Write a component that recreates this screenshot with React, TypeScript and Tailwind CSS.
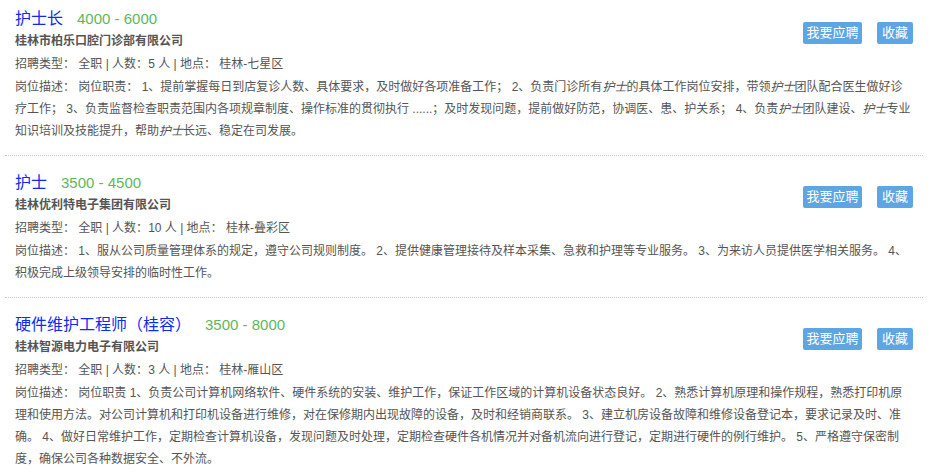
import * as React from 'react';

type Job = {
  title: string;
  salary: string;
  company: string;
  count: string;
  place: string;
  desc: React.ReactNode;
};

const Em = ({ children }: { children: React.ReactNode }) => (
  <em className="italic">{children}</em>
);

const jobs: Job[] = [
  {
    title: '护士长',
    salary: '4000 - 6000',
    company: '桂林市柏乐口腔门诊部有限公司',
    count: '5',
    place: '桂林-七星区',
    desc: (
      <>
        岗位职责： 1、提前掌握每日到店复诊人数、具体要求，及时做好各项准备工作； 2、负责门诊所有<Em>护士</Em>的具体工作岗位安排，带领<Em>护士</Em>团队配合医生做好诊疗工作； 3、负责监督检查职责范围内各项规章制度、操作标准的贯彻执行 ......；及时发现问题，提前做好防范，协调医、患、护关系； 4、负责<Em>护士</Em>团队建设、<Em>护士</Em>专业知识培训及技能提升，帮助<Em>护士</Em>长远、稳定在司发展。
      </>
    ),
  },
  {
    title: '护士',
    salary: '3500 - 4500',
    company: '桂林优利特电子集团有限公司',
    count: '10',
    place: '桂林-叠彩区',
    desc: '1、服从公司质量管理体系的规定，遵守公司规则制度。 2、提供健康管理接待及样本采集、急救和护理等专业服务。 3、为来访人员提供医学相关服务。 4、积极完成上级领导安排的临时性工作。',
  },
  {
    title: '硬件维护工程师（桂容）',
    salary: '3500 - 8000',
    company: '桂林智源电力电子有限公司',
    count: '3',
    place: '桂林-雁山区',
    desc: '岗位职责 1、负责公司计算机网络软件、硬件系统的安装、维护工作，保证工作区域的计算机设备状态良好。 2、熟悉计算机原理和操作规程，熟悉打印机原理和使用方法。对公司计算机和打印机设备进行维修，对在保修期内出现故障的设备，及时和经销商联系。 3、建立机房设备故障和维修设备登记本，要求记录及时、准确。 4、做好日常维护工作，定期检查计算机设备，发现问题及时处理，定期检查硬件各机情况并对备机流向进行登记，定期进行硬件的例行维护。 5、严格遵守保密制度，确保公司各种数据安全、不外流。',
  },
];

const JobItem = ({ job, first }: { job: Job; first: boolean }) => (
  <div
    className={`border-b border-dotted border-[#c8c8c8] px-[10px] pb-[13px] ${
      first ? 'pt-2' : 'pt-4'
    }`}
  >
    <div className="flex items-start justify-between">
      <div>
        <div className="flex items-baseline leading-[22px]">
          <span className="text-[16px] text-[#0a2cf5]">{job.title}</span>
          <span className="ml-[14px] text-[15px] text-[#5cb85c]">{job.salary}</span>
        </div>
        <div className="text-[12px] font-bold leading-[23px] text-[#555]">{job.company}</div>
      </div>
      <div className="mt-[14px] flex gap-[15px]">
        <button className="h-[22px] w-[59px] rounded-[2px] bg-[#5ea6e3] text-center text-[13px] leading-[22px] text-white">
          我要应聘
        </button>
        <button className="h-[22px] w-[36px] rounded-[2px] bg-[#5ea6e3] text-center text-[13px] leading-[22px] text-white">
          收藏
        </button>
      </div>
    </div>
    <div className="text-[12px] leading-[23px] text-[#555]">
      招聘类型： 全职 | 人数：{job.count} 人 | 地点： {job.place}
    </div>
    <div className="text-[12px] leading-[22px] text-[#555]">岗位描述： {job.desc}</div>
  </div>
);

export default function App() {
  return (
    <div
      className="h-[475px] w-[932px] overflow-hidden bg-white"
      style={{ fontFamily: '"Liberation Sans", "Noto Sans CJK SC", sans-serif' }}
    >
      <div className="ml-[5px] w-[918px]">
        {jobs.map((job, i) => (
          <JobItem key={i} job={job} first={i === 0} />
        ))}
      </div>
    </div>
  );
}
